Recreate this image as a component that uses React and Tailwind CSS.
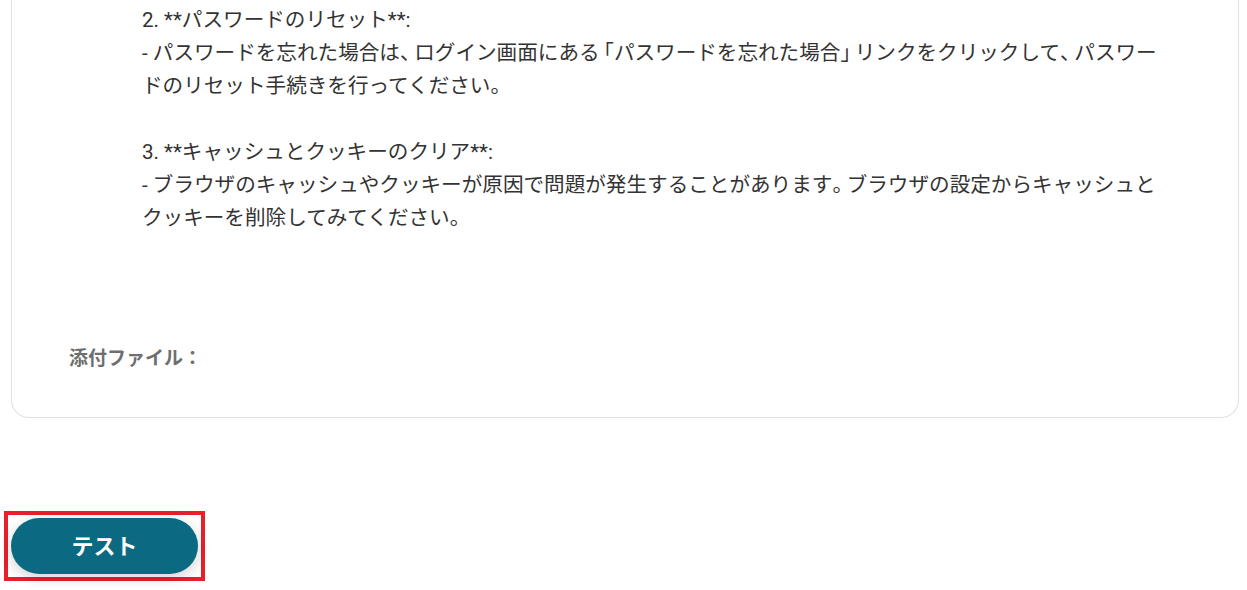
const font = { fontFamily: 'Roboto, "Noto Sans CJK JP", "Noto Sans", sans-serif' };

// narrow the full-width punctuation the way the source font renders it
function Jp({ text }) {
  return text.split(/([、。」「])/).map((part, i) => {
    if (part === "、" || part === "。" || part === "」") {
      return (
        <span key={i} className="[font-feature-settings:'halt'] mr-[4px]">
          {part}
        </span>
      );
    }
    if (part === "「") {
      return (
        <span key={i} className="[font-feature-settings:'halt'] ml-[4px]">
          {part}
        </span>
      );
    }
    if (!part) return null;
    return <span key={i}>{part}</span>;
  });
}

const lines = [
  "2. **パスワードのリセット**:",
  "- パスワードを忘れた場合は、ログイン画面にある「パスワードを忘れた場合」リンクをクリックして、パスワー",
  "ドのリセット手続きを行ってください。",
  "",
  "3. **キャッシュとクッキーのクリア**:",
  "- ブラウザのキャッシュやクッキーが原因で問題が発生することがあります。ブラウザの設定からキャッシュと",
  "クッキーを削除してみてください。",
];

export default function App() {
  return (
    <div className="w-[1247px] h-[590px] overflow-hidden bg-white relative" style={font}>
      {/* card (top scrolled out of view) */}
      <div className="ml-[11px] w-[1228px] h-[418px] border-x border-b border-[#e2e2e2] rounded-b-[18px] bg-white flex flex-col">
        <div className="ml-[130px] pt-[4px] text-[20.6px] leading-[33px] text-[#333333] whitespace-nowrap">
          {lines.map((line, i) => (
            <p key={i} className="h-[33px]">
              <Jp text={line} />
            </p>
          ))}
        </div>
        <div className="ml-[57px] mt-[110px] text-[19px] font-bold text-[#6e6e6e]">添付ファイル：</div>
      </div>

      {/* test button with highlight */}
      <div className="mt-[93px] ml-[4px] inline-block border-[4px] border-[#e8202a] p-[3px]">
        <button className="w-[187px] h-[56px] rounded-full bg-[#0b6a81] text-white text-[22px] font-bold shadow-[0_4px_14px_rgba(0,0,0,0.18)]">
          テスト
        </button>
      </div>
    </div>
  );
}
